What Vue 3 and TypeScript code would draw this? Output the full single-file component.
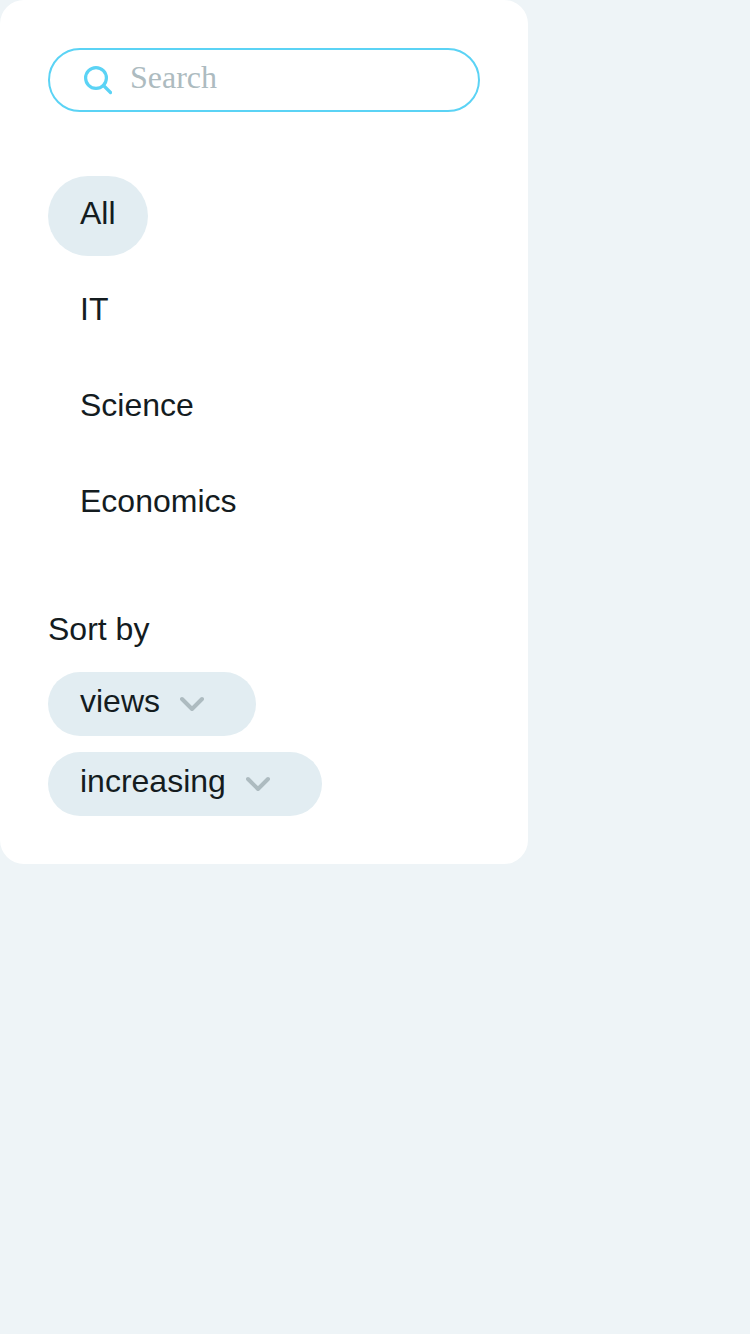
<script setup lang="ts">
import { ref } from 'vue'

const query = ref<string>('')
const active = ref<string>('All')
const categories: string[] = ['All', 'IT', 'Science', 'Economics']
const sorts: string[] = ['views', 'increasing']
</script>

<template>
  <aside class="panel">
    <label class="search">
      <svg class="search-icon" viewBox="0 0 32 32" fill="none">
        <circle cx="16" cy="14" r="10.4" />
        <path d="M23.5 21.5L30.5 28.5" />
      </svg>
      <input v-model="query" class="search-input" type="text" placeholder="Search" />
    </label>
    <nav class="categories">
      <button
        v-for="name in categories"
        :key="name"
        class="category"
        :class="{ active: name === active }"
        @click="active = name"
      >{{ name }}</button>
    </nav>
    <section class="sort">
      <div class="sort-title">Sort by</div>
      <button v-for="name in sorts" :key="name" class="sort-button">
        <span>{{ name }}</span>
        <svg class="chevron" viewBox="0 0 24 16" fill="none">
          <path d="M2 3L12 13L22 3" />
        </svg>
      </button>
    </section>
  </aside>
</template>

<style>
body {
  background: #eef4f7;
}
</style>

<style scoped>
.panel {
  box-sizing: border-box;
  width: 528px;
  height: 864px;
  padding: 48px;
  border-radius: 24px;
  background: #fff;
  color: #141c1f;
  font: 32px/40px "Liberation Sans", Arial, sans-serif;
}
.search {
  box-sizing: border-box;
  display: flex;
  align-items: center;
  height: 64px;
  padding: 0 30px;
  border: 2px solid #5bd3f5;
  border-radius: 32px;
}
.search-icon {
  flex: none;
  width: 32px;
  height: 32px;
  margin-right: 18px;
  stroke: #5bd3f5;
  stroke-width: 3.2;
  stroke-linecap: round;
}
.search-input {
  min-width: 0;
  flex: 1;
  height: 40px;
  margin-top: -6px;
  padding: 0;
  border: 0;
  outline: 0;
  background: none;
  color: #141c1f;
  font: 32px/40px "Liberation Serif", "Times New Roman", serif;
}
.search-input::placeholder {
  color: #adbbc0;
}
.categories {
  display: flex;
  flex-direction: column;
  align-items: flex-start;
  gap: 16px;
  margin-top: 64px;
}
.category,
.sort-button {
  border: 0;
  color: inherit;
  font: inherit;
  cursor: pointer;
}
.category {
  height: 80px;
  padding: 17px 32px 23px;
  border-radius: 40px;
  background: none;
}
.category.active {
  background: #e2edf2;
}
.sort {
  display: flex;
  flex-direction: column;
  align-items: flex-start;
  gap: 16px;
  margin-top: 64px;
}
.sort-title {
  height: 48px;
  line-height: 42px;
}
.sort-button {
  display: flex;
  align-items: center;
  height: 64px;
  padding: 0 52px 0 32px;
  border-radius: 32px;
  background: #e2edf2;
}
.sort-button span {
  padding-bottom: 6px;
}
.chevron {
  width: 24px;
  height: 16px;
  margin-left: 20px;
  stroke: #adbbc0;
  stroke-width: 4;
  stroke-linecap: round;
  stroke-linejoin: round;
}
</style>
